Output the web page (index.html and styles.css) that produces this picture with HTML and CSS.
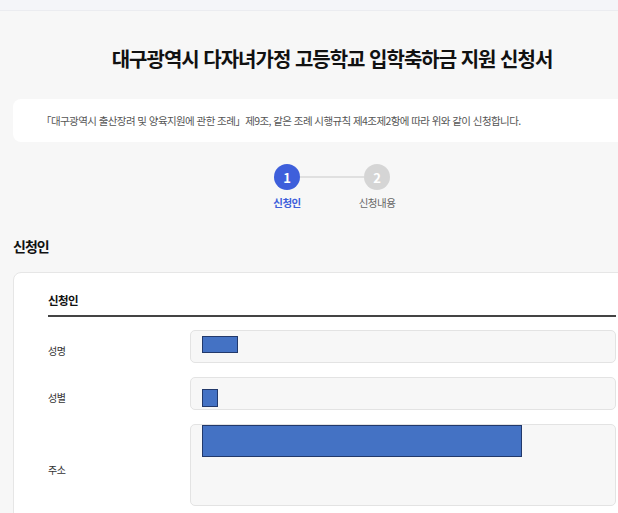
FILE: index.html
```html
<!DOCTYPE html>
<html lang="ko">
<head>
<meta charset="utf-8">
<title>대구광역시 다자녀가정 고등학교 입학축하금 지원 신청서</title>
<link rel="stylesheet" href="styles.css">
</head>
<body>
<div class="topbar"></div>
<main class="page">
  <h1 class="title">대구광역시 다자녀가정 고등학교 입학축하금 지원 신청서</h1>
  <div class="notice">「대구광역시 출산장려 및 양육지원에 관한 조례」제9조, 같은 조례 시행규칙 제4조제2항에 따라 위와 같이 신청합니다.</div>
  <div class="stepper">
    <div class="step active">
      <span class="circle">1</span>
      <span class="step-label">신청인</span>
    </div>
    <span class="step-line"></span>
    <div class="step">
      <span class="circle">2</span>
      <span class="step-label">신청내용</span>
    </div>
  </div>
  <h2 class="section-title">신청인</h2>
  <section class="card">
    <h3 class="card-title">신청인</h3>
    <div class="row">
      <div class="label">성명</div>
      <div class="field"><span class="mask mask-name"></span></div>
    </div>
    <div class="row">
      <div class="label">성별</div>
      <div class="field"><span class="mask mask-gender"></span></div>
    </div>
    <div class="row">
      <div class="label">주소</div>
      <div class="field field-tall"><span class="mask mask-address"></span></div>
    </div>
  </section>
</main>
</body>
</html>
```
FILE: styles.css
```css
html, body {
  margin: 0;
  padding: 0;
  overflow: hidden;
}
body {
  background: #f7f7f7;
  font-family: "Noto Sans CJK KR", "Noto Sans", sans-serif;
  color: #222;
  width: 618px;
  height: 513px;
}
.topbar {
  height: 10px;
  background: #f4f5f9;
  border-bottom: 1px solid #ebecf0;
}
.page {
  margin-left: 13px;
  width: 638px;
}
.title {
  margin: 34px 0 0;
  font-size: 20px;
  line-height: 28px;
  font-weight: 700;
  letter-spacing: -1px;
  text-align: center;
  color: #111;
}
.notice {
  margin-top: 26px;
  height: 43px;
  box-sizing: border-box;
  background: #fff;
  border-radius: 8px;
  padding: 0 0 0 28px;
  display: flex;
  align-items: center;
  font-size: 10.5px;
  letter-spacing: -0.58px;
  color: #555;
  white-space: nowrap;
}
.stepper {
  margin-top: 22px;
  display: flex;
  justify-content: center;
  align-items: flex-start;
}
.step {
  width: 60px;
  display: flex;
  flex-direction: column;
  align-items: center;
}
.circle {
  width: 26px;
  height: 26px;
  border-radius: 50%;
  background: #d5d5d5;
  color: #fff;
  font-size: 13px;
  font-weight: 700;
  display: flex;
  align-items: center;
  justify-content: center;
  line-height: 1;
}
.step.active .circle {
  background: #3e5fdb;
}
.step-label {
  margin-top: 6px;
  font-size: 10.5px;
  line-height: 14px;
  letter-spacing: -0.5px;
  color: #666;
  white-space: nowrap;
}
.step.active .step-label {
  color: #3e5fdb;
  font-weight: 700;
}
.step-line {
  width: 64px;
  margin: 12px -17px 0;
  height: 2px;
  background: #e0e0e0;
}
.section-title {
  margin: 26px 0 0;
  font-size: 14px;
  line-height: 20px;
  font-weight: 700;
  letter-spacing: -1px;
  color: #111;
}
.card {
  margin-top: 16px;
  background: #fff;
  border: 1px solid #e6e6e6;
  border-radius: 8px;
  padding: 18px 34px 20px 34px;
}
.card-title {
  margin: 0;
  font-size: 11.5px;
  line-height: 18px;
  font-weight: 700;
  letter-spacing: -0.6px;
  color: #111;
  padding-bottom: 6px;
  border-bottom: 2px solid #444;
}
.row {
  display: flex;
  align-items: center;
  margin-top: 13px;
}
.row + .row {
  margin-top: 14px;
}
.label {
  width: 142px;
  flex: none;
  padding-top: 8px;
  font-size: 10px;
  letter-spacing: -0.4px;
  color: #333;
}
.field {
  flex: 1;
  height: 33px;
  box-sizing: border-box;
  background: #f7f7f7;
  border: 1px solid #e3e3e3;
  border-radius: 5px;
  padding-left: 11px;
}
.field-tall {
  height: 82px;
}
.mask {
  display: block;
  box-sizing: border-box;
  background: #4472c4;
  border: 1.5px solid #22396b;
}
.mask-name {
  width: 36px;
  height: 17px;
  margin-top: 5px;
}
.mask-gender {
  width: 16px;
  height: 18px;
  margin-top: 11px;
}
.mask-address {
  width: 320px;
  height: 32px;
  margin-top: 0;
}
```
